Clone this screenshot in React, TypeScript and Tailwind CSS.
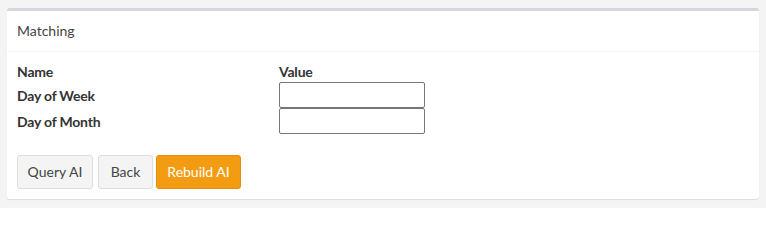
import React from "react";

export default function App() {
  return (
    <div
      className="w-[766px] h-[208px] bg-[#f4f4f4] pt-[8px] px-[7px] text-[14px] text-[#333]"
      style={{ fontFamily: "Lato, 'Open Sans', sans-serif" }}
    >
      <div className="bg-white border-t-[3px] border-[#d2d6de] rounded-[3px] shadow-[0_1px_1px_rgba(0,0,0,0.1)]">
        <div className="h-[41px] border-b border-[#f4f4f4] px-[10px] flex items-center text-[#444] leading-[20px]">
          Matching
        </div>
        <div className="px-[10px] pt-[10px] pb-[10px]">
          <table className="border-collapse">
            <tbody>
              <tr className="h-[20px]">
                <td className="w-[262px] p-0 font-bold leading-[20px] align-middle tracking-[-0.2px]">Name</td>
                <td className="p-0 font-bold leading-[20px] align-middle tracking-[-0.2px]">Value</td>
              </tr>
              <tr className="h-[26px]">
                <td className="p-0 font-bold align-middle tracking-[-0.2px]">Day of Week</td>
                <td className="p-0 align-middle">
                  <input className="block w-[146px] h-[26px] border border-[#767676] rounded-[2px] px-[2px]" />
                </td>
              </tr>
              <tr className="h-[26px]">
                <td className="p-0 font-bold align-middle tracking-[-0.2px]">Day of Month</td>
                <td className="p-0 align-middle">
                  <input className="block w-[146px] h-[26px] border border-[#767676] rounded-[2px] px-[2px]" />
                </td>
              </tr>
            </tbody>
          </table>
          <div className="flex mt-[21px]">
            <button className="h-[34px] border border-[#ddd] bg-[#f4f4f4] text-[#444] rounded-[3px] leading-[20px] w-[76px] whitespace-nowrap flex items-center justify-center">
              Query AI
            </button>
            <button className="ml-[5px] h-[34px] border border-[#ddd] bg-[#f4f4f4] text-[#444] rounded-[3px] leading-[20px] w-[55px] whitespace-nowrap flex items-center justify-center">
              Back
            </button>
            <button className="ml-[3px] h-[34px] border border-[#e08e0b] bg-[#f39c12] text-white rounded-[3px] leading-[20px] w-[85px] whitespace-nowrap flex items-center justify-center">
              Rebuild AI
            </button>
          </div>
        </div>
      </div>
    </div>
  );
}
